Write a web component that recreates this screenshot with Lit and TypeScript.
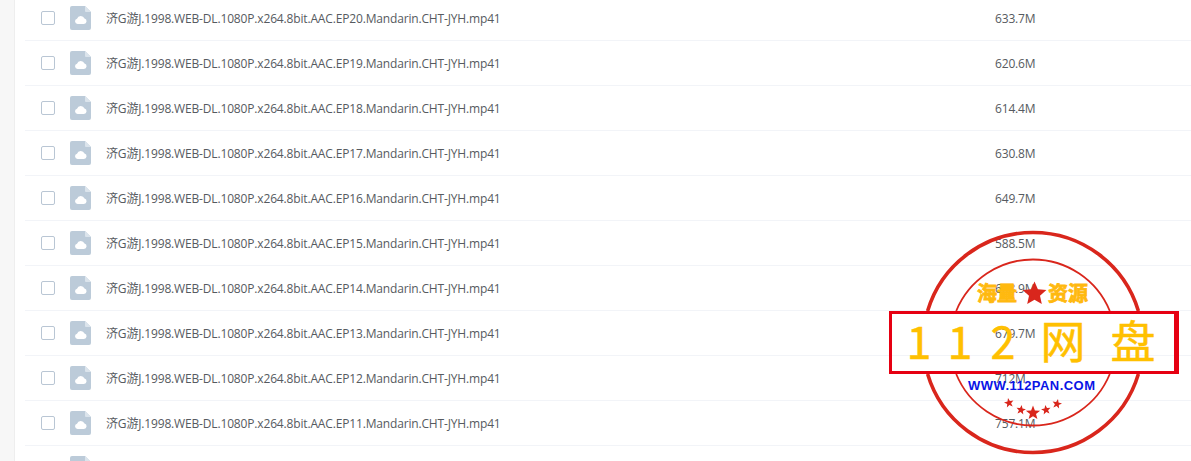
import { LitElement, html, svg, css } from "lit";
import { customElement } from "lit/decorators.js";

const FILES: [string, string][] = [
  ["EP20", "633.7M"], ["EP19", "620.6M"], ["EP18", "614.4M"], ["EP17", "630.8M"],
  ["EP16", "649.7M"], ["EP15", "588.5M"], ["EP14", "608.9M"], ["EP13", "679.7M"],
  ["EP12", "712M"], ["EP11", "757.1M"], ["", ""],
];

function starPoints(cx: number, cy: number, r: number, rot = 0, inner = 0.42): string {
  const pts: string[] = [];
  for (let i = 0; i < 10; i++) {
    const rad = i % 2 === 0 ? r : r * inner;
    const a = -Math.PI / 2 + (i * Math.PI) / 5 + rot;
    pts.push(`${(cx + rad * Math.cos(a)).toFixed(1)},${(cy + rad * Math.sin(a)).toFixed(1)}`);
  }
  return pts.join(" ");
}

@customElement("app-root")
export class AppRoot extends LitElement {
  static styles = css`
    :host {
      display: block;
      position: relative;
      width: 1191px;
      height: 461px;
      overflow: hidden;
      background: #fff;
      font-family: "Open Sans", "Noto Sans CJK SC", sans-serif;
    }
    .page { display: flex; height: 100%; }
    .side {
      width: 14px;
      flex: none;
      background: #f7f7f7;
      border-right: 1px solid #eeeeee;
    }
    .list { flex: 1; margin: -4px 0 0 10px; min-width: 0; }
    .row {
      display: flex;
      align-items: center;
      height: 44px;
      border-bottom: 1px solid #f2f4f8;
      font-size: 12px;
      letter-spacing: -0.16px;
      color: #565a60;
    }
    .check {
      width: 12px;
      height: 12px;
      margin-left: 16px;
      flex: none;
      border: 1px solid #b9c6d4;
      border-radius: 2px;
      background: #fff;
    }
    .icon { display: block; width: 21px; height: 24px; margin-left: 15px; flex: none; }
    .name { margin-left: 15px; width: 889px; flex: none; white-space: nowrap; }
    .stamp { position: absolute; left: 880px; top: 220px; width: 311px; height: 241px; pointer-events: none; }
    .big { font: 400 45px "Noto Sans CJK SC", sans-serif; fill: #ffc000; stroke: #ffc000; stroke-width: 0.5; }
    .slogan { font: 700 20px "Noto Sans CJK SC", sans-serif; fill: #ffb90f; stroke: #ffb90f; stroke-width: 0.8; }
    .url { font: 700 13px "Liberation Sans", Arial, sans-serif; fill: #0a14e6; }
  `;

  private fileIcon() {
    return html`<svg class="icon" viewBox="0 0 21 24">
      <path d="M2 0H15L21 6V22a2 2 0 0 1-2 2H2a2 2 0 0 1-2-2V2a2 2 0 0 1 2-2Z" fill="#bccbd9"/>
      <path d="M15 0L21 6H16a1 1 0 0 1-1-1Z" fill="#dbe4ec"/>
      <path d="M7.6 18a2.7 2.7 0 0 1-.6-5.3a4 4 0 0 1 7.5-.2a2.8 2.8 0 0 1-.6 5.5Z" fill="#fff"/>
    </svg>`;
  }

  private stamp() {
    const stars: [number, number, number, number][] = [
      [129, 183, 5, -0.2], [141, 190, 5, 0.15], [153, 193, 7.5, 0], [166, 190, 5, -0.15], [177, 184, 5, 0.2],
    ];
    return html`<svg class="stamp" viewBox="0 0 311 241">
      <g fill="none" stroke="#d9261c">
        <path stroke-width="3.6" d="M47.6 91A110 110 0 0 1 258.4 91"/>
        <path stroke-width="3.6" d="M47.6 154A110 110 0 0 0 258.4 154"/>
        <path stroke-width="1.8" d="M76.2 91A83 83 0 0 1 229.8 91"/>
        <path stroke-width="1.8" d="M76.2 154A83 83 0 0 0 229.8 154"/>
      </g>
      <rect x="10.5" y="92.5" width="286" height="60" fill="none" stroke="#e60012" stroke-width="3"/>
      <rect x="294" y="91" width="5" height="63" fill="#e60012"/>
      <text class="slogan" x="97" y="81">海量</text>
      <polygon points="${starPoints(154.5, 74, 12.5, 0, 0.46)}" fill="#d9261c"/>
      <text class="slogan" x="168" y="81">资源</text>
      <text class="big" x="39" y="139" text-anchor="middle">1</text>
      <text class="big" x="80" y="139" text-anchor="middle">1</text>
      <text class="big" x="123" y="139" text-anchor="middle">2</text>
      <text class="big" x="183" y="139" text-anchor="middle">网</text>
      <text class="big" x="253" y="139" text-anchor="middle">盘</text>
      <text class="url" x="88" y="170" textLength="127" lengthAdjust="spacing">WWW.112PAN.COM</text>
      ${stars.map(([x, y, r, rot]) => svg`<polygon points="${starPoints(x, y, r, rot)}" fill="#d9261c"/>`)}
    </svg>`;
  }

  render() {
    return html`
      <div class="page">
        <div class="side"></div>
        <div class="list">
          ${FILES.map(([ep, size]) => html`
            <div class="row">
              <span class="check"></span>
              ${this.fileIcon()}
              ${ep
                ? html`<span class="name">济G游J.1998.WEB-DL.1080P.x264.8bit.AAC.${ep}.Mandarin.CHT-JYH.mp41</span>
                    <span>${size}</span>`
                : ""}
            </div>`)}
        </div>
      </div>
      ${this.stamp()}
    `;
  }
}
